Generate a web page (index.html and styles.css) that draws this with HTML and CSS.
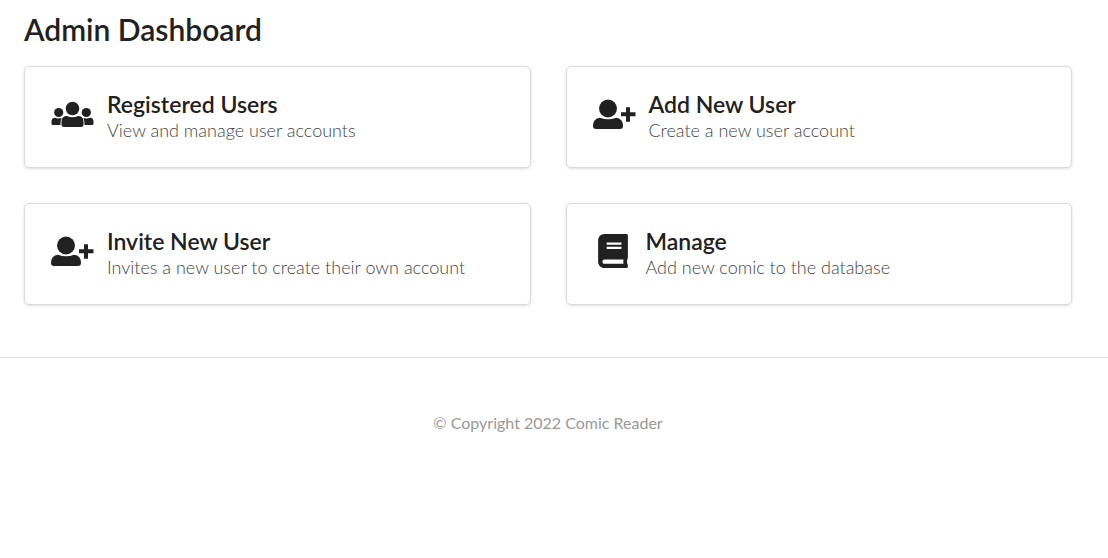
FILE: index.html
```html
<!DOCTYPE html>
<html lang="en">
<head>
<meta charset="utf-8">
<title>Admin Dashboard</title>
<link rel="stylesheet" href="styles.css">
</head>
<body>
<svg class="sprite" aria-hidden="true">
<symbol id="users" viewBox="0 0 43 34"><circle cx="21.500" cy="11.500" r="6.800"/><circle cx="7.700" cy="15.500" r="4.600"/><circle cx="35.300" cy="15.500" r="4.600"/><path d="M16 19Q21.500 21.500 27 19Q32.500 19 32.500 24.500V27.500Q32.500 30 30 30H13Q10.500 30 10.500 27.500V24.500Q10.500 19 16 19Z"/><path d="M4 20.700Q7 22 10.500 21Q9.500 23 9.500 28H2Q.5 28 .5 26.500V24.500Q.5 21 4 20.700ZM39 20.700Q36 22 32.500 21Q33.500 23 33.500 28H41Q42.500 28 42.500 26.500V24.500Q42.500 21 39 20.700Z"/></symbol>
<symbol id="user-plus" viewBox="0 0 43 34"><circle cx="15" cy="11.500" r="9"/><path d="M7 20.700Q15 24 23 20.700Q30 21.500 30 29Q30 32 27 32H3Q0 32 0 29Q0 21.500 7 20.700Z"/><path d="M33 10.200H37V15.200H42.500V19.200H37V24.700H33V19.200H28V15.200H33Z"/></symbol>
<symbol id="book" viewBox="0 0 448 512"><path d="M448 360V24c0-13.300-10.700-24-24-24H96C43 0 0 43 0 96v320c0 53 43 96 96 96h328c13.300 0 24-10.700 24-24v-16c0-7.500-3.500-14.300-8.900-18.700-4.200-15.400-4.200-59.300 0-74.700 5.400-4.300 8.900-11.100 8.900-18.600zM128 134c0-3.300 2.700-6 6-6h212c3.300 0 6 2.700 6 6v20c0 3.300-2.700 6-6 6H134c-3.300 0-6-2.700-6-6v-20zm0 64c0-3.300 2.700-6 6-6h212c3.300 0 6 2.700 6 6v20c0 3.300-2.700 6-6 6H134c-3.300 0-6-2.700-6-6v-20zm253.400 250H96c-17.700 0-32-14.300-32-32 0-17.600 14.400-32 32-32h285.400c-1.900 17.100-1.900 46.900 0 64z"/></symbol>
</svg>
<main class="dashboard">
<h1 class="title">Admin Dashboard</h1>
<div class="cards">
<section class="card"><svg class="icon" aria-hidden="true"><use href="#users"/></svg><div><h2 class="name">Registered Users</h2><p class="text">View and manage user accounts</p></div></section>
<section class="card"><svg class="icon" aria-hidden="true"><use href="#user-plus"/></svg><div><h2 class="name">Add New User</h2><p class="text">Create a new user account</p></div></section>
<section class="card"><svg class="icon" aria-hidden="true"><use href="#user-plus"/></svg><div><h2 class="name">Invite New User</h2><p class="text">Invites a new user to create their own account</p></div></section>
<section class="card"><svg class="icon icon-book" aria-hidden="true"><use href="#book"/></svg><div><h2 class="name">Manage</h2><p class="text">Add new comic to the database</p></div></section>
</div>
</main>
<footer class="footer">© Copyright 2022 Comic Reader</footer>
</body>
</html>
```
FILE: styles.css
```css
* { box-sizing: border-box; }
body {
  margin: 0;
  background: #fff;
  color: #212121;
  font-family: Lato, "Liberation Sans", sans-serif;
}
.sprite { display: none; }
.dashboard { padding: 11px 36px 52px 24px; }
.title {
  margin: 0 0 19px;
  font-size: 30px;
  line-height: 36px;
  font-weight: 600;
}
.cards {
  display: grid;
  grid-template-columns: 1fr 1fr;
  gap: 35px;
}
.card {
  display: flex;
  align-items: flex-start;
  min-height: 102px;
  padding: 24px 26px;
  border: 1px solid #dadbdc;
  border-radius: 5px;
  box-shadow: 0 1px 3px rgba(34, 36, 38, 0.15);
}
.icon {
  flex: none;
  width: 43px;
  height: 34px;
  margin: 6px 13px 0 0;
  fill: #212121;
}
.icon-book {
  width: 30px;
  margin: 6px 18px 0 5px;
}
.name {
  margin: 0;
  font-size: 23px;
  line-height: 26px;
  font-weight: 600;
}
.text {
  margin: 0;
  color: #444;
  font-size: 18px;
  line-height: 26px;
  font-weight: 300;
}
.footer {
  padding: 53px 36px 54px 24px;
  border-top: 1px solid #dededf;
  color: #999;
  font-size: 16px;
  line-height: 24px;
  text-align: center;
}
```
